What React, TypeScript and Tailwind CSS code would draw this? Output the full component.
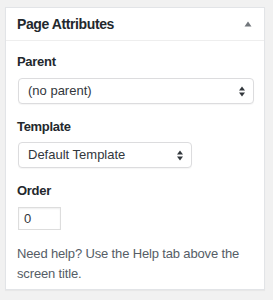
import React from 'react';

const font = { fontFamily: '"Liberation Sans", Arial, sans-serif' };

function SelectArrows() {
  return (
    <svg width="6" height="11" viewBox="0 0 6 11" className="shrink-0">
      <path d="M3 0.5 L6 4.5 L0 4.5 Z" fill="#32373c" />
      <path d="M3 10.5 L6 6.5 L0 6.5 Z" fill="#32373c" />
    </svg>
  );
}

function FakeSelect({ value, width }: { value: string; width: string }) {
  return (
    <div
      className={`${width} h-[26px] flex items-center justify-between pl-[9px] pr-[8px] border border-[#dcdcde] rounded-[4px] bg-white shadow-[0_1px_1px_rgba(0,0,0,0.04)] text-[13px] text-[#32373c]`}
    >
      <span>{value}</span>
      <SelectArrows />
    </div>
  );
}

export default function App() {
  return (
    <div className="w-[273px] h-[300px] bg-[#f1f1f1] pt-[7px] pl-[5px]" style={font}>
      <div className="w-[260px] h-[283px] bg-white border border-[#e2e4e7] shadow-[0_1px_1px_rgba(0,0,0,0.04)]">
        {/* header */}
        <div className="h-[33px] flex items-center justify-between pl-[11px] pr-[12px] border-b border-[#eeeeee]">
          <h2 className="text-[14px] font-bold tracking-[-0.4px] text-[#23282d]">Page Attributes</h2>
          <svg width="8" height="6" viewBox="0 0 8 6">
            <path d="M4 0.5 L7.5 5.5 L0.5 5.5 Z" fill="#72777c" />
          </svg>
        </div>

        <div className="px-[11px] pt-[11px] text-[13px]">
          <p className="h-[20px] leading-[20px] font-bold tracking-[-0.3px] text-[#23282d]">Parent</p>
          <div className="mt-[6px] pl-px">
            <FakeSelect value="(no parent)" width="w-[236px]" />
          </div>

          <p className="mt-[13px] h-[20px] leading-[20px] font-bold tracking-[-0.3px] text-[#23282d]">Template</p>
          <div className="mt-[5px] pl-px">
            <FakeSelect value="Default Template" width="w-[174px]" />
          </div>

          <p className="mt-[13px] h-[20px] leading-[20px] font-bold tracking-[-0.3px] text-[#23282d]">Order</p>
          <div className="mt-[6px] pl-px">
            <div className="w-[43px] h-[23px] flex items-center pl-[5px] border border-[#dddddd] bg-white text-[13px] text-[#32373c] shadow-[inset_0_1px_2px_rgba(0,0,0,0.07)]">
              0
            </div>
          </div>

          <p className="mt-[14px] leading-[20px] tracking-[-0.15px] text-[#555d66]">
            Need help? Use the Help tab above the screen title.
          </p>
        </div>
      </div>
    </div>
  );
}
